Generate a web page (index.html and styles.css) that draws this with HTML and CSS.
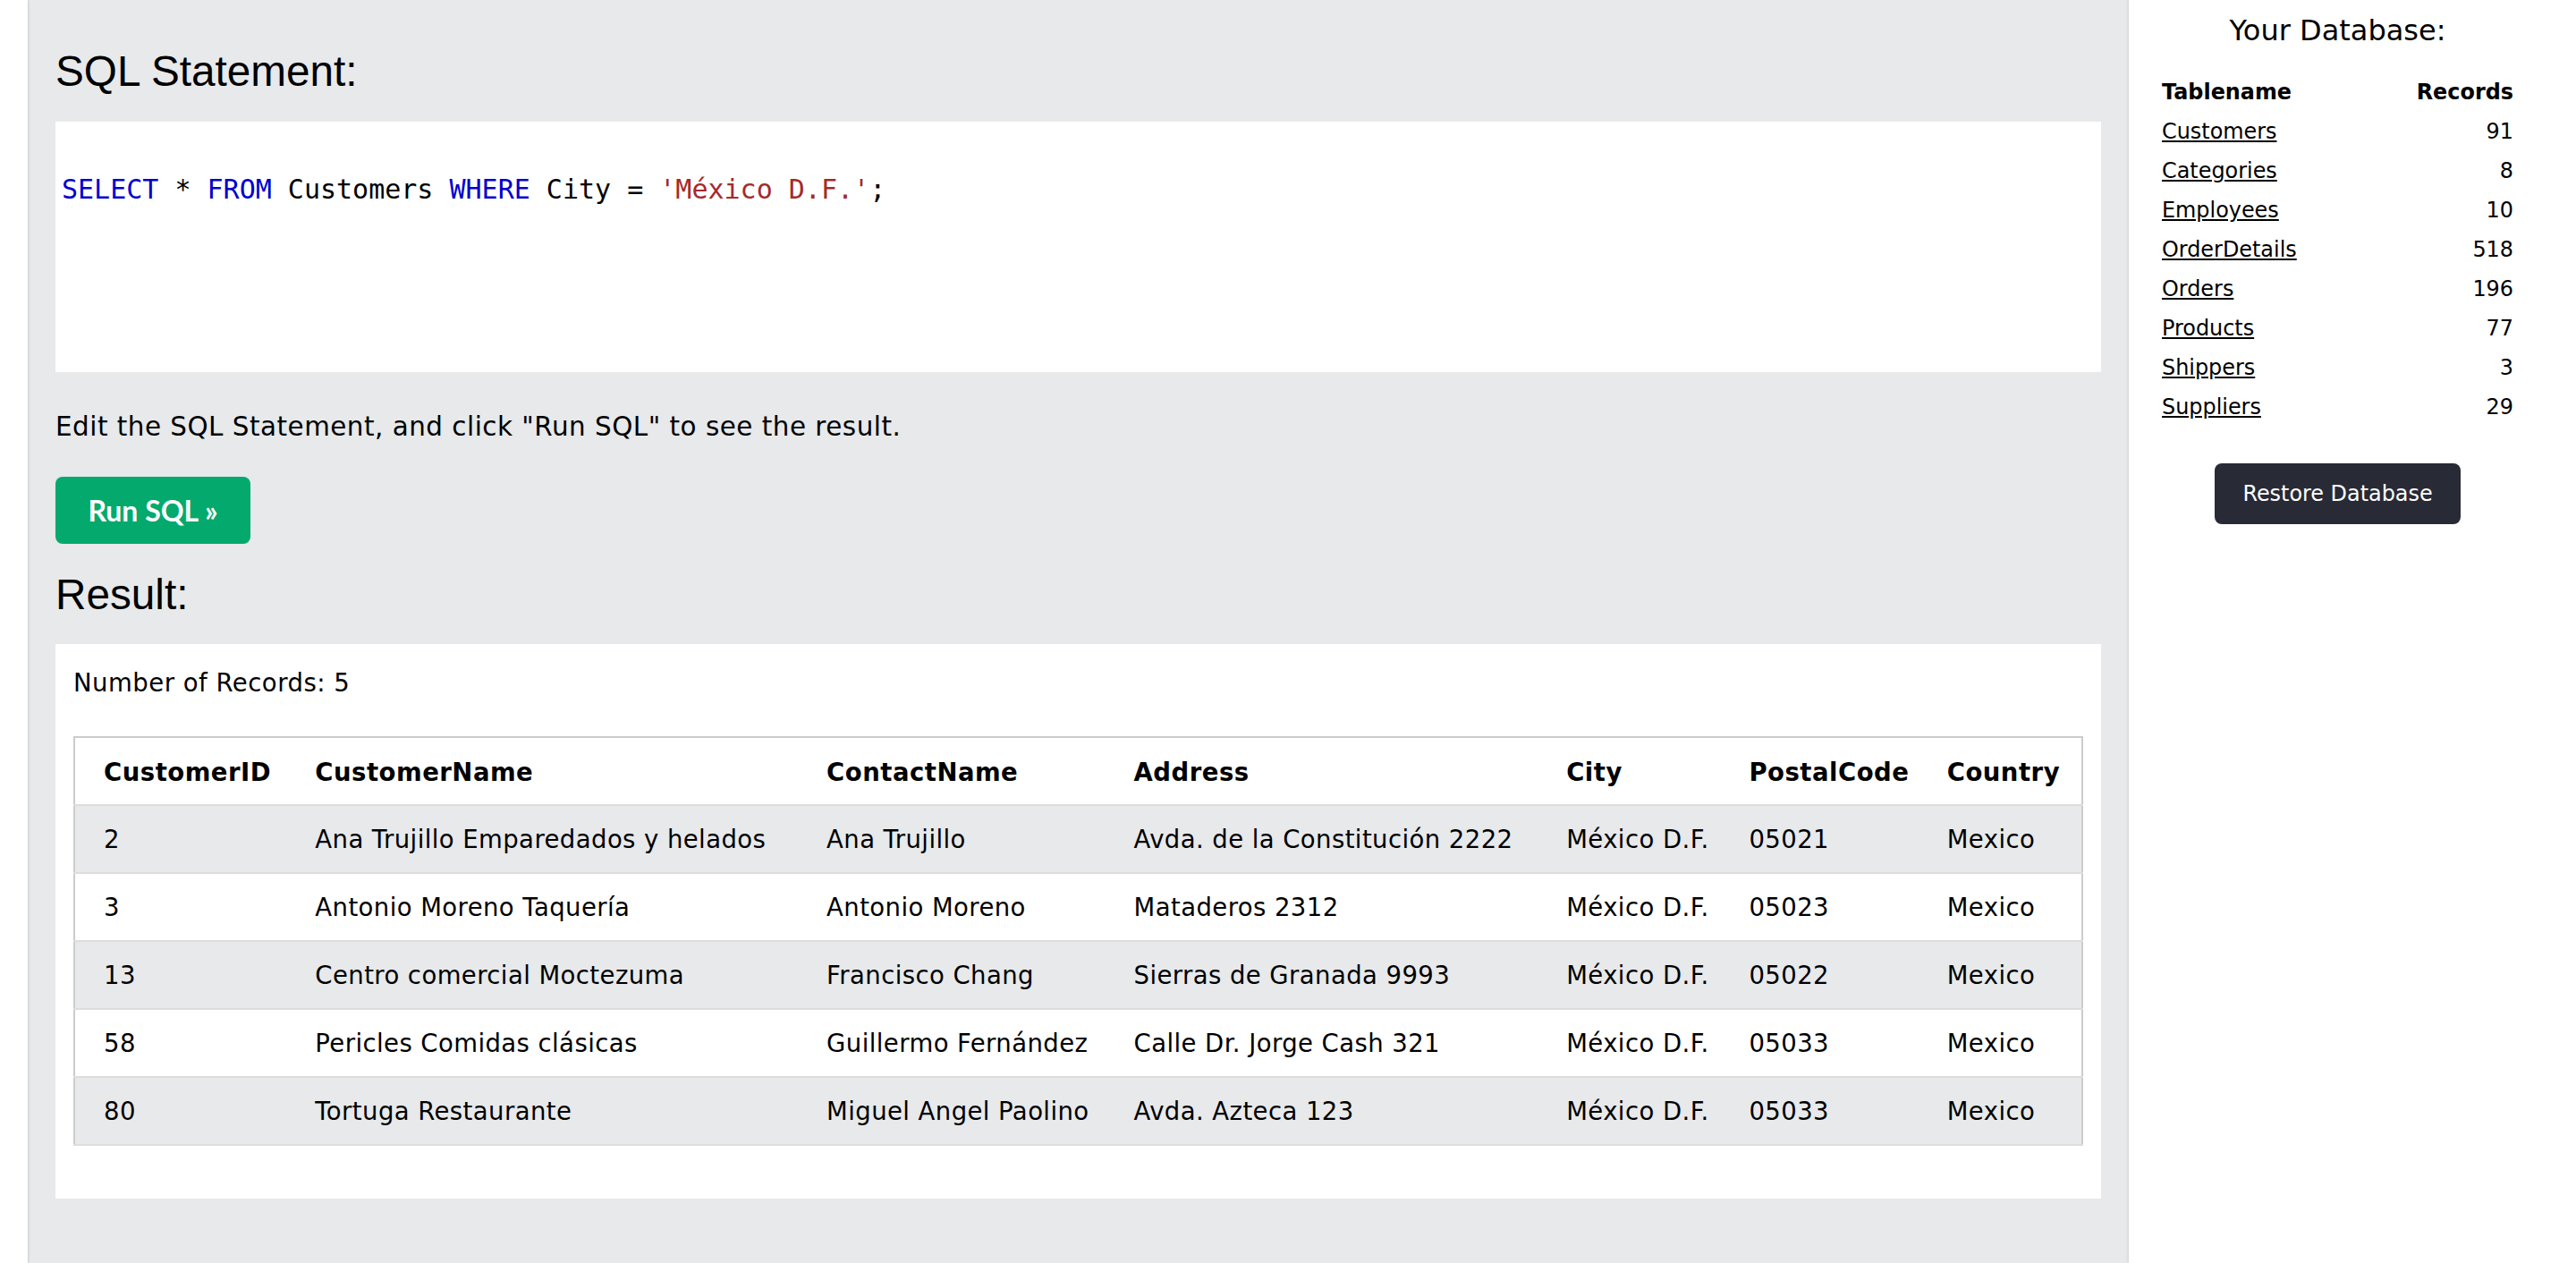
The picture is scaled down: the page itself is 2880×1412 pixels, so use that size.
FILE: index.html
```html
<!DOCTYPE html>
<html lang="en">
<head>
<meta charset="utf-8">
<title>SQL Tryit Editor</title>
<link rel="stylesheet" href="styles.css">
</head>
<body>
<div class="page">
  <div class="edge"></div>
  <main class="main">
    <h2 class="heading">SQL Statement:</h2>
    <div class="code"><span class="kw">SELECT</span> * <span class="kw">FROM</span> Customers <span class="kw">WHERE</span> City = <span class="str">'México D.F.'</span>;</div>
    <p class="hint">Edit the SQL Statement, and click "Run SQL" to see the result.</p>
    <button class="run" type="button">Run SQL »</button>
    <h2 class="heading result-heading">Result:</h2>
    <div class="result">
      <div class="count">Number of Records: 5</div>
      <table class="data">
        <colgroup>
          <col class="c1"><col class="c2"><col class="c3"><col class="c4"><col class="c5"><col class="c6"><col class="c7">
        </colgroup>
        <thead>
          <tr><th>CustomerID</th><th>CustomerName</th><th>ContactName</th><th>Address</th><th>City</th><th>PostalCode</th><th>Country</th></tr>
        </thead>
        <tbody>
          <tr><td>2</td><td>Ana Trujillo Emparedados y helados</td><td>Ana Trujillo</td><td>Avda. de la Constitución 2222</td><td>México D.F.</td><td>05021</td><td>Mexico</td></tr>
          <tr><td>3</td><td>Antonio Moreno Taquería</td><td>Antonio Moreno</td><td>Mataderos 2312</td><td>México D.F.</td><td>05023</td><td>Mexico</td></tr>
          <tr><td>13</td><td>Centro comercial Moctezuma</td><td>Francisco Chang</td><td>Sierras de Granada 9993</td><td>México D.F.</td><td>05022</td><td>Mexico</td></tr>
          <tr><td>58</td><td>Pericles Comidas clásicas</td><td>Guillermo Fernández</td><td>Calle Dr. Jorge Cash 321</td><td>México D.F.</td><td>05033</td><td>Mexico</td></tr>
          <tr><td>80</td><td>Tortuga Restaurante</td><td>Miguel Angel Paolino</td><td>Avda. Azteca 123</td><td>México D.F.</td><td>05033</td><td>Mexico</td></tr>
        </tbody>
      </table>
    </div>
  </main>
  <aside class="side">
    <div class="side-title">Your Database:</div>
    <table class="db">
      <thead>
        <tr><th class="name">Tablename</th><th class="num">Records</th></tr>
      </thead>
      <tbody>
        <tr><td class="name"><a href="#">Customers</a></td><td class="num">91</td></tr>
        <tr><td class="name"><a href="#">Categories</a></td><td class="num">8</td></tr>
        <tr><td class="name"><a href="#">Employees</a></td><td class="num">10</td></tr>
        <tr><td class="name"><a href="#">OrderDetails</a></td><td class="num">518</td></tr>
        <tr><td class="name"><a href="#">Orders</a></td><td class="num">196</td></tr>
        <tr><td class="name"><a href="#">Products</a></td><td class="num">77</td></tr>
        <tr><td class="name"><a href="#">Shippers</a></td><td class="num">3</td></tr>
        <tr><td class="name"><a href="#">Suppliers</a></td><td class="num">29</td></tr>
      </tbody>
    </table>
    <button class="restore" type="button">Restore Database</button>
  </aside>
</div>
</body>
</html>
```
FILE: styles.css
```css
html, body {
  margin: 0;
  padding: 0;
}

body {
  font-family: "DejaVu Sans", Verdana, sans-serif;
  font-size: 27.5px;
  color: #000;
  background: #fff;
}

.page {
  display: flex;
  min-height: 1412px;
}

.edge {
  flex: none;
  width: 31px;
  background: #fff;
  box-shadow: 1px 0 2px rgba(0, 0, 0, 0.12);
  position: relative;
  z-index: 1;
}

.main {
  flex: 1;
  min-width: 0;
  background: #E7E9EB;
  padding: 56px 31px 0 31px;
  letter-spacing: 0.42px;
}

.heading {
  font-family: "Liberation Sans", Arial, sans-serif;
  font-weight: normal;
  font-size: 47.7px;
  line-height: 48px;
  margin: 0;
  letter-spacing: 0;
}

.code {
  margin-top: 32px;
  height: 280px;
  box-sizing: border-box;
  background: #fff;
  padding: 61px 7px 0;
  font-family: "DejaVu Sans Mono", monospace;
  font-size: 30px;
  line-height: 30px;
  letter-spacing: 0;
  white-space: pre;
}

.kw {
  color: #0000CD;
}

.str {
  color: #A52A2A;
}

.hint {
  margin: 44.5px 0 0;
  font-size: 29.4px;
  line-height: 32px;
  letter-spacing: 0.5px;
}

.run {
  display: block;
  margin-top: 40.5px;
  width: 218px;
  height: 75px;
  padding: 0;
  background: #04AA6D;
  color: #fff;
  border: none;
  border-radius: 8px;
  font-family: Lato, "Open Sans", sans-serif;
  font-weight: 700;
  font-size: 32px;
  letter-spacing: 0;
}

.result-heading {
  margin-top: 33px;
}

.result {
  margin-top: 31px;
  background: #fff;
  padding: 26.5px 20px 59px;
}

.count {
  line-height: 32px;
  letter-spacing: 0.5px;
}

.data {
  margin-top: 44.5px;
  width: 100%;
  border-collapse: collapse;
  border: 2px solid #ccc;
  table-layout: fixed;
}

.data .c1 { width: 253px; }
.data .c2 { width: 571px; }
.data .c3 { width: 343px; }
.data .c4 { width: 483px; }
.data .c5 { width: 204px; }
.data .c6 { width: 221px; }
.data .c7 { width: 167px; }

.data th,
.data td {
  padding: 21px 16px;
  line-height: 32px;
  text-align: left;
  white-space: nowrap;
  border-bottom: 2px solid #ddd;
}

.data th {
  letter-spacing: 0.5px;
}

.data thead th {
  padding-top: 22px;
  padding-bottom: 20px;
}

.data th:first-child,
.data td:first-child {
  padding-left: 32px;
}

.data tbody tr:nth-child(odd) {
  background: #E7E9EB;
}

.side {
  flex: none;
  width: 500px;
  box-sizing: border-box;
  background: #fff;
  box-shadow: -1px 0 3px rgba(0, 0, 0, 0.1);
  padding: 16px 70px 0 37px;
}

.side-title {
  text-align: center;
  font-size: 32px;
  line-height: 37px;
}

.db {
  width: 100%;
  margin-top: 28px;
  border-collapse: collapse;
  font-size: 23.9px;
}

.db th,
.db td {
  height: 44px;
  padding: 0;
  line-height: 28px;
}

.db .name {
  text-align: left;
}

.db .num {
  text-align: right;
}

.db a {
  color: #000;
  text-decoration: underline;
}

.restore {
  display: block;
  margin: 41px auto 0;
  width: 275px;
  height: 68px;
  padding: 0;
  background: #282A35;
  color: #fff;
  border: none;
  border-radius: 8px;
  font-family: "DejaVu Sans", Verdana, sans-serif;
  font-size: 23.9px;
}
```
